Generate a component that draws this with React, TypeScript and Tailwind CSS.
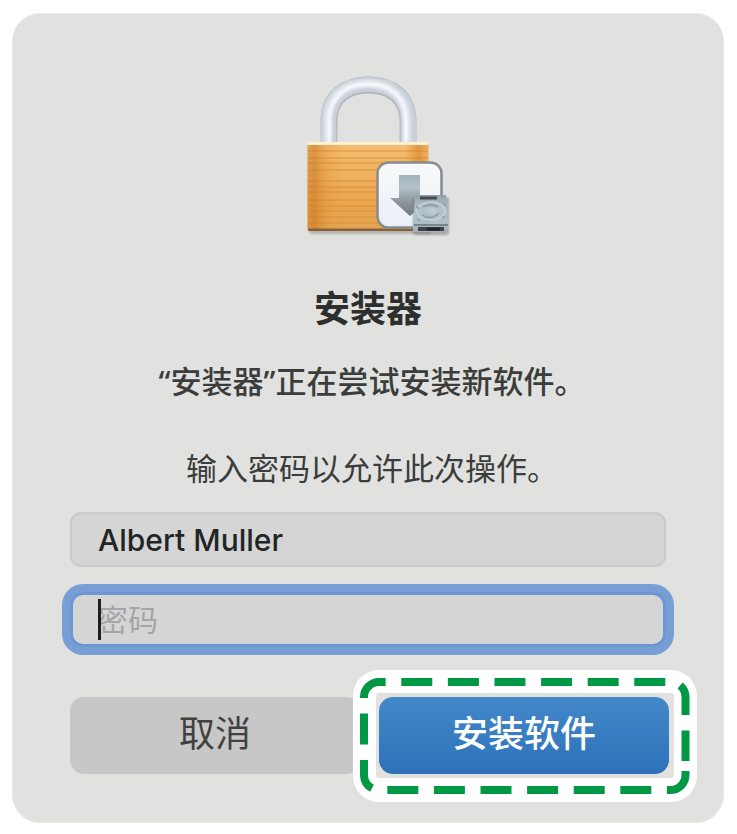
import { useState } from 'react';

const grainLines = [151, 158, 163, 170, 181, 187, 192, 200, 206, 211, 217, 223];

function LockIcon() {
  return (
    <svg viewBox="286 74 164 164" className="h-[164px] w-[164px]" aria-hidden="true">
      <defs>
        <linearGradient id="wood" x1="0" y1="0" x2="0" y2="1">
          <stop offset="0" stopColor="#f4be72" />
          <stop offset="0.35" stopColor="#f0b160" />
          <stop offset="0.7" stopColor="#eaa64e" />
          <stop offset="1" stopColor="#e3a553" />
        </linearGradient>
        <linearGradient id="woodSide" x1="0" y1="0" x2="1" y2="0">
          <stop offset="0" stopColor="#c87420" stopOpacity="0.4" />
          <stop offset="0.06" stopColor="#c87420" stopOpacity="0.55" />
          <stop offset="0.16" stopColor="#d88a30" stopOpacity="0.25" />
          <stop offset="0.3" stopColor="#e09030" stopOpacity="0" />
          <stop offset="0.8" stopColor="#e09030" stopOpacity="0" />
          <stop offset="0.92" stopColor="#cf7d25" stopOpacity="0.6" />
          <stop offset="1" stopColor="#e09a40" stopOpacity="0.3" />
        </linearGradient>
        <linearGradient id="steel" x1="0" y1="0" x2="0" y2="1">
          <stop offset="0" stopColor="#a9b2ba" />
          <stop offset="1" stopColor="#b9bfc8" />
        </linearGradient>
        <linearGradient id="arrow" x1="0" y1="0" x2="0" y2="1">
          <stop offset="0" stopColor="#a5b3bc" />
          <stop offset="0.3" stopColor="#b3c0c8" />
          <stop offset="0.65" stopColor="#8d979c" />
          <stop offset="1" stopColor="#737778" />
        </linearGradient>
        <linearGradient id="badge" x1="0" y1="0" x2="0" y2="1">
          <stop offset="0" stopColor="#f8f9fa" />
          <stop offset="1" stopColor="#eaeff7" />
        </linearGradient>
        <linearGradient id="disk" x1="0" y1="0" x2="0" y2="1">
          <stop offset="0" stopColor="#93a0a7" />
          <stop offset="0.35" stopColor="#b3c2cb" />
          <stop offset="0.75" stopColor="#b0bfc7" />
          <stop offset="1" stopColor="#a4adb3" />
        </linearGradient>
        <filter id="soft" x="-20%" y="-20%" width="140%" height="140%">
          <feGaussianBlur stdDeviation="1.2" />
        </filter>
      </defs>

      {/* shackle */}
      <g fill="none">
        <path d="M329 144V121C329 97 346 85 368.500 85S408 97 408 121V144" stroke="url(#steel)" strokeWidth="17" />
        <path d="M328.500 144V121C328.500 96.500 346 84.500 368.500 84.500S408.500 96.500 408.500 121V144" stroke="#c9cfd8" strokeWidth="15" />
        <path d="M328 144V121C328 95 346 83.500 368 83.500S407 97 407 121V144" stroke="#dde2e8" strokeWidth="9" filter="url(#soft)" />
        <path d="M329 142V119C330 96 346 84 368 84S405 96 406 119V142" stroke="#f5f8fc" strokeWidth="4" filter="url(#soft)" />
      </g>

      {/* body */}
      <rect x="309" y="226" width="122" height="8" rx="2" fill="#77736c" opacity="0.4" filter="url(#soft)" />
      <rect x="307.500" y="142.500" width="121" height="88" rx="2" fill="url(#wood)" />
      {grainLines.map((y) => (
        <path key={y} d={`M308 ${y}H428`} stroke="#d98b32" strokeWidth="1.800" opacity="0.4" />
      ))}
      <rect x="307.500" y="144" width="121" height="86" rx="1" fill="url(#woodSide)" />
      <rect x="307.500" y="142" width="121" height="3" fill="#fff1d0" />
      <rect x="308" y="228.500" width="120" height="2.500" rx="1" fill="#87613a" />

      {/* download badge */}
      <rect x="377.500" y="162.500" width="64" height="65" rx="11" fill="url(#badge)" stroke="#878c91" strokeWidth="2.500" />
      <path d="M399 175H420V198H430L410 216L390 198H399Z" fill="url(#arrow)" />

      {/* disk */}
      <rect x="413" y="197" width="36" height="38" rx="3" fill="#6d7275" opacity="0.5" filter="url(#soft)" />
      <path d="M415 195H446L448 222V232H413V222Z" fill="url(#disk)" />
      <ellipse cx="431" cy="211" rx="14" ry="9" fill="none" stroke="#c6d3da" strokeWidth="1.500" />
      <path d="M423 207q7-4 15 0M422 215q9 6 17-2" fill="none" stroke="#8c9ca5" strokeWidth="1.500" />
      <ellipse cx="432" cy="211" rx="5" ry="3" fill="#bccad2" />
      <path d="M416 206l3 3M443 203l3 3M417 219l3 2M442 218l3-2" stroke="#8b999f" strokeWidth="1.500" />
      <path d="M420 198H437" stroke="#444a4d" strokeWidth="3" />
      <path d="M414 225H448" stroke="#77858d" strokeWidth="2" />
      <path d="M418 229H444" stroke="#3c4245" strokeWidth="4" />
      <path d="M427 229H440" stroke="#202425" strokeWidth="3" />
    </svg>
  );
}

function HighlightFrame() {
  return (
    <svg
      viewBox="353 670 344 132"
      preserveAspectRatio="none"
      className="pointer-events-none absolute -top-[27px] -left-[26px] h-[calc(100%+55px)] w-[calc(100%+54px)]"
      aria-hidden="true"
    >
      <path
        fillRule="evenodd"
        fill="#fff"
        d="M379 670H671A26 26 0 0 1 697 696V776A26 26 0 0 1 671 802H379A26 26 0 0 1 353 776V696A26 26 0 0 1 379 670ZM379 693A3 3 0 0 0 376 696V775A3 3 0 0 0 379 778H671A3 3 0 0 0 674 775V696A3 3 0 0 0 671 693Z"
      />
      <path
        fill="none"
        stroke="#009844"
        strokeWidth="8"
        strokeDasharray="31 15.6"
        d="M685.500 771V775A15 15 0 0 1 670.500 790H379A15 15 0 0 1 364 775V697A15 15 0 0 1 379 682H670.500A15 15 0 0 1 685.500 697V761"
      />
    </svg>
  );
}

export default function App() {
  const [name, setName] = useState('Albert Muller');
  const [password, setPassword] = useState('');

  return (
    <div className="min-h-screen bg-white pt-[13px] pr-[13px] pb-[11px] pl-3 font-['Inter','Noto_Sans_CJK_SC',sans-serif]">
      <main className="rounded-[28px] border border-[#e9e9e8] bg-[#e1e1df] px-[57px] pt-[60px] pb-12">
        <div className="flex flex-col items-center text-center text-[#3a3d3b]">
          <LockIcon />
          <h1 className="mt-[47px] text-[36px] leading-[48px] font-bold text-[#2c2f2d]">安装器</h1>
          <div className="mt-[26px] pl-2 font-['Noto_Sans','Noto_Sans_CJK_SC',sans-serif] text-[31px] leading-[44px]">
            <p className="font-medium">“安装器”正在尝试安装新软件。</p>
            <p className="mt-[43px]">输入密码以允许此次操作。</p>
          </div>
        </div>

        <form onSubmit={(e) => e.preventDefault()} className="mt-[22px]">
          <input
            type="text"
            aria-label="用户名"
            value={name}
            onChange={(e) => setName(e.target.value)}
            className="block h-[55px] w-full rounded-[11px] border-2 border-[#cacaca] bg-[#d5d5d5] px-[26px] text-[30px] font-medium text-[#222524] outline-none"
          />

          <div className="relative mt-[25px]">
            <input
              type="password"
              aria-label="密码"
              placeholder="密码"
              value={password}
              onChange={(e) => setPassword(e.target.value)}
              className="block h-[55px] w-full rounded-[13px] border-3 border-[#6c96d4] bg-[#d5d5d5] px-[25px] text-[30px] text-[#222524] ring-8 ring-[#779fd6] outline-none placeholder:text-[#a5a5a5]"
            />
            {password === '' && <span className="absolute inset-y-[7px] left-7 w-[3px] bg-[#1c1f1e]" />}
          </div>

          <div className="mt-[50px] -mr-[3px] grid grid-cols-2 gap-[19px] text-[36px] font-medium">
            <button type="button" className="h-[77px] rounded-[14px] bg-[#c7c7c7] pb-1 font-normal text-[#3f4240]">
              取消
            </button>
            <div className="relative">
              <HighlightFrame />
              <button
                type="submit"
                className="relative h-[77px] w-full rounded-[14px] bg-linear-to-b from-[#4388c9] to-[#2d71b9] pb-1 text-white"
              >
                安装软件
              </button>
            </div>
          </div>
        </form>
      </main>
    </div>
  );
}
